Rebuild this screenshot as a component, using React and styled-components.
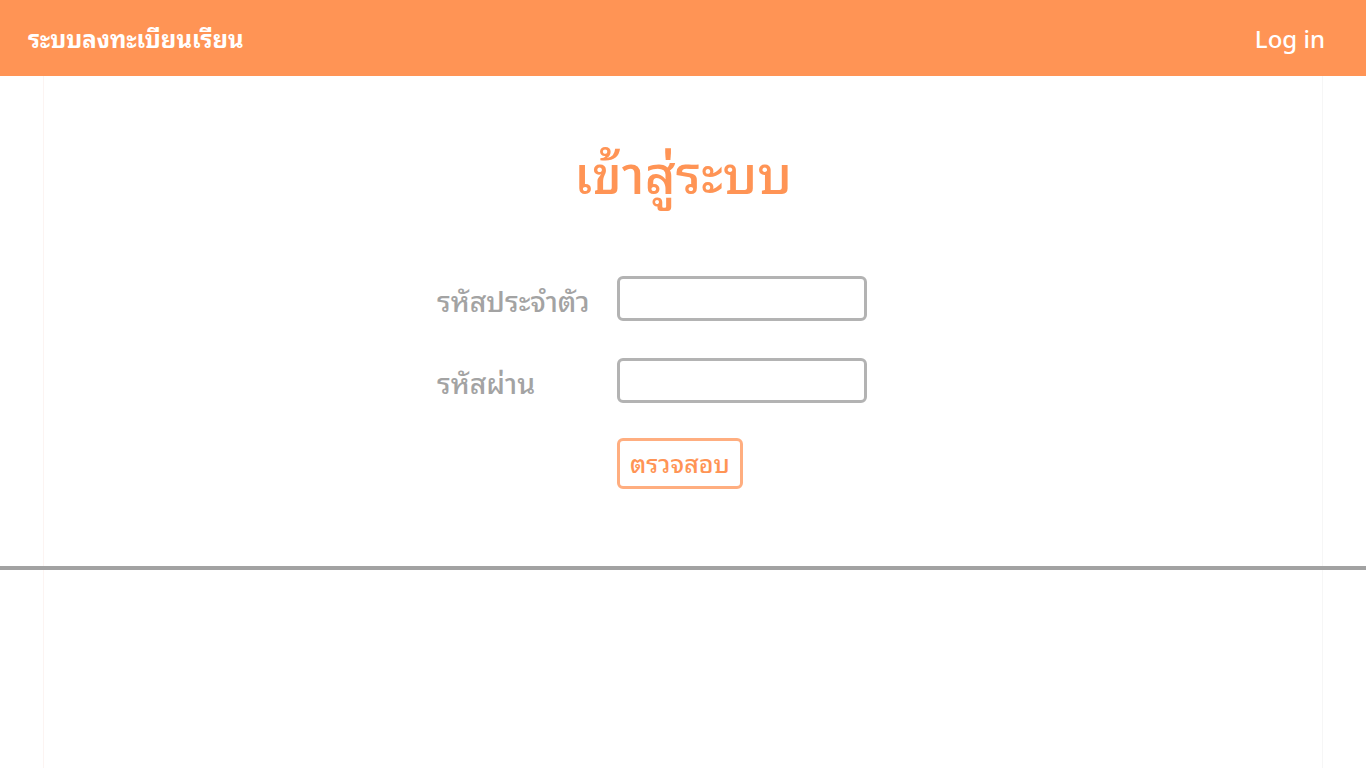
import React from "react";
import styled, { createGlobalStyle } from "styled-components";

const Global = createGlobalStyle`
  html, body { margin: 0; padding: 0; background: #fff; }
  body { font-family: "Noto Sans Thai Looped", "Noto Sans", "Noto Sans Thai", sans-serif; }
  #root { min-height: 768px; }
`;

const Page = styled.div`
  min-height: 768px;
  display: flex;
  flex-direction: column;
`;

const Header = styled.header`
  height: 76px;
  background: #ff9455;
  display: flex;
  align-items: center;
  justify-content: space-between;
  padding: 0 41px 2px 28px;
  box-sizing: border-box;
  color: #fff;
`;

const Brand = styled.div`
  font-size: 24px;
  font-weight: 700;
`;

const LoginLink = styled.a`
  font-size: 24px;
  font-weight: 500;
  color: #fff;
  text-decoration: none;
`;

const Body = styled.div`
  flex: 1;
  display: flex;
  flex-direction: column;
  position: relative;
`;

const Container = styled.div`
  width: 1280px;
  margin: 0 auto;
  box-sizing: border-box;
  border-left: 1px solid #fcf4f2;
  border-right: 1px solid #f6f6f6;
  flex: 1;
  display: flex;
  flex-direction: column;
`;

const Section = styled.section`
  height: 490px;
  display: flex;
  flex-direction: column;
  align-items: center;
  padding-top: 57px;
  box-sizing: border-box;
`;

const Title = styled.h1`
  margin: 0;
  font-size: 53px;
  font-weight: 500;
  color: #ff9455;
  line-height: 76px;
`;

const Form = styled.form`
  margin-top: 67px;
  width: 492px;
  display: grid;
  grid-template-columns: 180px 250px;
  row-gap: 37px;
  align-items: start;
`;

const Label = styled.label`
  font-size: 28.5px;
  font-weight: 500;
  color: #a3a3a3;
  height: 45px;
  box-sizing: border-box;
  line-height: 44px;
  padding-top: 1px;
`;

const Input = styled.input`
  width: 250px;
  height: 45px;
  box-sizing: border-box;
  border: 3px solid #b3b3b3;
  border-radius: 6px;
  outline: none;
  font-size: 18px;
  padding: 0 8px;
`;

const Button = styled.button`
  grid-column: 2;
  justify-self: start;
  width: 126px;
  height: 51px;
  margin-top: -2px;
  box-sizing: border-box;
  border: 3px solid #ffae80;
  border-radius: 6px;
  background: #fff;
  color: #ff9455;
  font-family: inherit;
  font-size: 25px;
  font-weight: 500;
  padding: 0 0 3px 0;
  cursor: pointer;
`;

const Rule = styled.hr`
  position: absolute;
  left: 0;
  right: 0;
  top: 490px;
  margin: 0;
  border: none;
  height: 4px;
  background: #a2a2a2;
`;

export default function App() {
  return (
    <Page>
      <Global />
      <Header>
        <Brand>ระบบลงทะเบียนเรียน</Brand>
        <LoginLink href="#">Log in</LoginLink>
      </Header>
      <Body>
        <Container>
          <Section>
            <Title>เข้าสู่ระบบ</Title>
            <Form onSubmit={(e) => e.preventDefault()}>
              <Label>รหัสประจำตัว</Label>
              <Input type="text" />
              <Label>รหัสผ่าน</Label>
              <Input type="password" />
              <Button type="submit">ตรวจสอบ</Button>
            </Form>
          </Section>
        </Container>
        <Rule />
      </Body>
    </Page>
  );
}
